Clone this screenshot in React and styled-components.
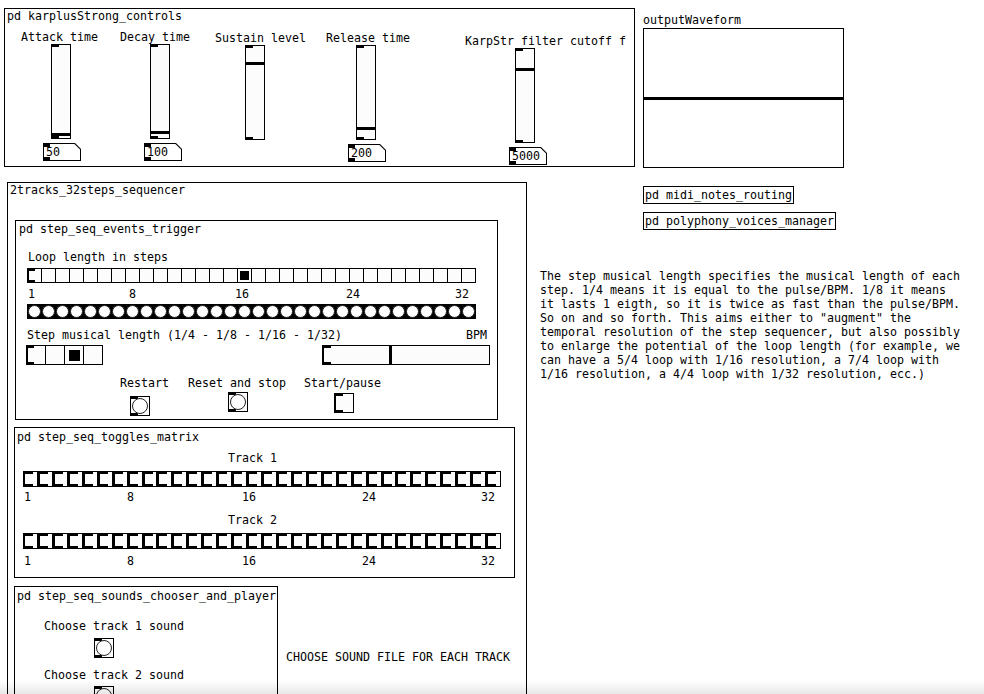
import React from 'react';
import styled, { createGlobalStyle } from 'styled-components';

const GlobalStyle = createGlobalStyle`
  html, body {
    margin: 0;
    padding: 0;
    background: #fff;
    overflow: hidden;
  }
  body {
    font-family: "DejaVu Sans Mono", "Liberation Mono", monospace;
    font-size: 11.63px;
    line-height: 14px;
    color: #000;
  }
`;

const CH = 7;
const FACE = '#fcfcfc';

// small black rectangle drawn as a background layer (pd inlet / outlet marks, knobs)
const ink = (w, h, pos) => `linear-gradient(#000, #000) ${pos} / ${w} ${h} no-repeat`;
const ioMarks = (w = 7, h = 2) => `${ink(`${w}px`, `${h}px`, 'left top')}, ${ink(`${w}px`, `${h}px`, 'left bottom')}`;

const Page = styled.div`
  position: relative;
  width: 984px;
  height: 694px;
  overflow: hidden;
  box-sizing: border-box;
  padding: 8px 0 0 4px;
`;

const Shade = styled.div`
  position: absolute;
  left: 0;
  right: 0;
  bottom: 0;
  height: 14px;
  pointer-events: none;
  background: linear-gradient(to bottom, rgba(0, 0, 0, 0), rgba(0, 0, 0, 0.09));
`;

const TopRow = styled.div`
  display: flex;
  align-items: flex-start;
  height: 160px;
`;

const BottomRow = styled.div`
  display: flex;
  align-items: flex-start;
  margin-top: 14px;
`;

const Gop = styled.div`
  flex: none;
  box-sizing: border-box;
  width: ${p => p.$w}px;
  height: ${p => p.$h}px;
  margin-left: ${p => p.$ml || 0}px;
  margin-top: ${p => p.$mt || 0}px;
  border: 1px solid #000;
  display: flex;
  flex-direction: column;
  align-items: flex-start;
`;

const Caption = styled.div`
  white-space: pre;
  height: 14px;
  margin-left: ${p => p.$ml || 0}px;
  margin-top: ${p => p.$mt || 0}px;
`;

const Label = styled.div`
  white-space: pre;
  height: 14px;
  margin-left: ${p => p.$ml || 0}px;
  margin-top: ${p => p.$mt || 0}px;
`;

/* ---------- karplus strong controls ---------- */

const ControlRow = styled.div`
  display: flex;
  align-items: flex-start;
  margin-top: 7px;
  padding-left: 16px;
`;

const Control = styled.div`
  flex: none;
  width: ${p => p.$w}px;
  margin-top: ${p => p.$dy}px;
  display: flex;
  flex-direction: column;
  align-items: flex-start;
`;

const VSlider = styled.div`
  box-sizing: border-box;
  width: 20px;
  height: 95px;
  margin-left: ${p => p.$ml}px;
  border: 1px solid #000;
  background: ${ioMarks()}, ${p => ink('100%', '3px', `0 ${p.$knob}px`)}, ${FACE};
`;

const NumBox = styled.div`
  box-sizing: border-box;
  width: 38px;
  height: 18px;
  padding: 1px;
  margin-top: 4px;
  margin-left: ${p => p.$ml}px;
  background: #000;
  clip-path: polygon(0 0, calc(100% - 6px) 0, 100% 6px, 100% 100%, 0 100%);
`;

const NumFace = styled.div`
  box-sizing: border-box;
  height: 100%;
  padding-left: 2px;
  line-height: 17px;
  background: ${ioMarks(6, 3)}, #fff;
  clip-path: polygon(0 0, calc(100% - 5.6px) 0, 100% 5.6px, 100% 100%, 0 100%);
`;

const Scope = styled.div`
  flex: none;
  display: flex;
  flex-direction: column;
  margin-left: 8px;
  margin-top: 5px;
`;

const ScopeArea = styled.div`
  box-sizing: border-box;
  width: 201px;
  height: 140px;
  margin-top: 1px;
  border: 1px solid #000;
  background: ${ink('100%', '3px', '0 68px')}, #fff;
`;

/* ---------- pd widgets ---------- */

const RadioRow = styled.div`
  display: flex;
  margin-left: ${p => p.$ml}px;
  margin-top: ${p => p.$mt}px;
`;

const RadioCell = styled.div`
  box-sizing: border-box;
  width: ${p => p.$s}px;
  height: ${p => p.$s}px;
  border: 1px solid #000;
  & + & {
    margin-left: -1px;
  }
  background: ${p => [
    p.$first ? ioMarks(6, 2) : null,
    p.$on ? ink(`${p.$dot}px`, `${p.$dot}px`, 'center') : null,
    FACE,
  ].filter(Boolean).join(', ')};
  ${p => p.$first && 'border-left-width: 2px;'}
`;

const BangRow = styled.div`
  display: flex;
  margin-left: 11px;
  margin-top: 3px;
`;

const BangCell = styled.div`
  box-sizing: border-box;
  width: 15px;
  height: 15px;
  padding: 1px;
  background: #000;
  & + & {
    margin-left: -1px;
  }
`;

const Dot = styled.div`
  box-sizing: border-box;
  width: 100%;
  height: 100%;
  border-radius: 50%;
  border: 1px solid #222;
  background: #fff;
`;

const Bang = styled.div`
  box-sizing: border-box;
  width: 20px;
  height: 20px;
  padding: 1px;
  margin-left: ${p => p.$ml}px;
  margin-top: ${p => p.$mt}px;
  border: 1px solid #000;
  background: ${ioMarks(7, 2)}, ${FACE};
`;

const Toggle = styled.div`
  box-sizing: border-box;
  width: 20px;
  height: 20px;
  margin-left: ${p => p.$ml}px;
  margin-top: ${p => p.$mt}px;
  border: 1px solid #000;
  border-left-width: 2px;
  background: ${ioMarks(7, 2)}, ${FACE};
`;

const ToggleRow = styled.div`
  display: grid;
  grid-template-columns: repeat(32, 1fr);
  width: 478px;
  height: 16px;
  margin-left: 8px;
  margin-top: ${p => p.$mt}px;
`;

const ToggleCell = styled.div`
  box-sizing: border-box;
  border: 1px solid #000;
  border-left-width: 2px;
  background: ${ioMarks(8, 2)}, ${FACE};
`;

const HSlider = styled.div`
  box-sizing: border-box;
  width: 168px;
  height: 20px;
  margin-left: ${p => p.$ml}px;
  border: 1px solid #000;
  border-left-width: 2px;
  background: ${ioMarks(7, 2)}, ${p => ink('3px', '100%', `${p.$knob}px 0`)}, ${FACE};
`;

const WidgetRow = styled.div`
  display: flex;
  align-items: flex-start;
  margin-left: ${p => p.$ml}px;
  margin-top: ${p => p.$mt}px;
`;

const HeaderLine = styled.div`
  display: flex;
  justify-content: space-between;
  width: 460px;
  margin-left: 11px;
  margin-top: 9px;
  white-space: pre;
`;

const Trigger = styled.div`
  flex: none;
  width: ${p => p.$w}px;
  display: flex;
  flex-direction: column;
  align-items: flex-start;
`;

const RulerRow = styled.div`
  display: flex;
  height: 14px;
  margin-top: ${p => p.$mt}px;
`;

const Tick = styled.span`
  flex: none;
  white-space: pre;
  margin-left: ${p => p.$ml}px;
`;

const PdObj = styled.div`
  box-sizing: border-box;
  height: 18px;
  padding: 0 1px;
  line-height: 16px;
  white-space: pre;
  border: 1px solid #000;
  margin-left: 103px;
  margin-top: ${p => p.$mt}px;
`;

const SideCol = styled.div`
  display: flex;
  flex-direction: column;
  align-items: flex-start;
  margin-left: 13px;
`;

const Comment = styled.div`
  white-space: pre;
  line-height: 14px;
  margin-top: ${p => p.$mt}px;
  margin-left: ${p => p.$ml || 0}px;
`;

const SoundsRow = styled.div`
  display: flex;
  align-items: flex-start;
  margin-top: 8px;
`;

/* ---------- data ---------- */

const controls = [
  { label: 'Attack time', w: 99, dy: 0, knob: 88, num: '50', nml: 22 },
  { label: 'Decay time', w: 95, dy: 0, knob: 86, num: '100', nml: 24 },
  { label: 'Sustain level', w: 111, dy: 1, knob: 16 },
  { label: 'Release time', w: 139, dy: 1, knob: 81, num: '200', nml: 22 },
  { label: 'KarpStr filter cutoff f', w: 161, dy: 4, knob: 19, num: '5000', nml: 44, sml: 50 },
];

const stepMarks = [['1', 28], ['8', 129], ['16', 235], ['24', 346], ['32', 455]];
const trackMarks = [['1', 24], ['8', 127], ['16', 242], ['24', 362], ['32', 481]];

const commentText = [
  'The step musical length specifies the musical length of each',
  'step. 1/4 means it is equal to the pulse/BPM. 1/8 it means',
  'it lasts 1 eigth, so it is twice as fast than the pulse/BPM.',
  'So on and so forth. This aims either to "augment" the',
  'temporal resolution of the step sequencer, but also possibly',
  'to enlarge the potential of the loop length (for example, we',
  'can have a 5/4 loop with 1/16 resolution, a 7/4 loop with',
  '1/16 resolution, a 4/4 loop with 1/32 resolution, ecc.)',
].join('\n');

const steps = Array.from({ length: 32 }, (_, i) => i);

const Ruler = ({ base, marks, mt }) => {
  let pos = base;
  return (
    <RulerRow $mt={mt}>
      {marks.map(([t, x]) => {
        const ml = x - pos;
        pos = x + t.length * CH;
        return <Tick key={t} $ml={ml}>{t}</Tick>;
      })}
    </RulerRow>
  );
};

const Radio = ({ count, size, dot, selected, ml, mt }) => (
  <RadioRow $ml={ml} $mt={mt}>
    {Array.from({ length: count }, (_, i) => (
      <RadioCell key={i} $s={size} $dot={dot} $first={i === 0} $on={i === selected} />
    ))}
  </RadioRow>
);

const TrackToggles = ({ mt }) => (
  <ToggleRow $mt={mt}>
    {steps.map(i => <ToggleCell key={i} />)}
  </ToggleRow>
);

export default function App() {
  return (
    <>
      <GlobalStyle />
      <Page>
        <TopRow>
          <Gop $w={631} $h={159}>
            <Caption $ml={2}>pd karplusStrong_controls</Caption>
            <ControlRow>
              {controls.map(c => (
                <Control key={c.label} $w={c.w} $dy={c.dy}>
                  <Label>{c.label}</Label>
                  <VSlider $ml={c.sml || 30} $knob={c.knob} />
                  {c.num && (
                    <NumBox $ml={c.nml}>
                      <NumFace>{c.num}</NumFace>
                    </NumBox>
                  )}
                </Control>
              ))}
            </ControlRow>
          </Gop>
          <Scope>
            <Label>outputWaveform</Label>
            <ScopeArea />
          </Scope>
        </TopRow>

        <BottomRow>
          <Gop $w={520} $h={560} $ml={3}>
            <Caption $ml={2}>2tracks_32steps_sequencer</Caption>

            <Gop $w={483} $h={200} $ml={7} $mt={23}>
              <Caption $ml={3} $mt={1}>pd step_seq_events_trigger</Caption>
              <Label $ml={12} $mt={14}>Loop length in steps</Label>
              <Radio count={32} size={15} dot={9} selected={15} ml={11} mt={4} />
              <Ruler base={16} marks={stepMarks} mt={4} />
              <BangRow>
                {steps.map(i => (
                  <BangCell key={i}><Dot /></BangCell>
                ))}
              </BangRow>
              <HeaderLine>
                <span>Step musical length (1/4 - 1/8 - 1/16 - 1/32)</span>
                <span>BPM</span>
              </HeaderLine>
              <WidgetRow $ml={10} $mt={3}>
                <Radio count={4} size={20} dot={11} selected={2} ml={0} mt={0} />
                <HSlider $ml={219} $knob={65} />
              </WidgetRow>
              <WidgetRow $ml={104} $mt={11}>
                <Trigger $w={68}>
                  <Label>Restart</Label>
                  <Bang $ml={10} $mt={6}><Dot /></Bang>
                </Trigger>
                <Trigger $w={116}>
                  <Label>Reset and stop</Label>
                  <Bang $ml={40} $mt={2}><Dot /></Bang>
                </Trigger>
                <Trigger $w={100}>
                  <Label>Start/pause</Label>
                  <Toggle $ml={30} $mt={3} />
                </Trigger>
              </WidgetRow>
            </Gop>

            <Gop $w={501} $h={151} $ml={6} $mt={7}>
              <Caption $ml={2} $mt={2}>pd step_seq_toggles_matrix</Caption>
              <Label $ml={213} $mt={7}>Track 1</Label>
              <TrackToggles mt={6} />
              <Ruler base={15} marks={trackMarks} mt={3} />
              <Label $ml={213} $mt={9}>Track 2</Label>
              <TrackToggles mt={6} />
              <Ruler base={15} marks={trackMarks} mt={5} />
            </Gop>

            <SoundsRow>
              <Gop $w={264} $h={150} $ml={6}>
                <Caption $ml={2} $mt={2}>pd step_seq_sounds_chooser_and_player</Caption>
                <Label $ml={29} $mt={16}>Choose track 1 sound</Label>
                <Bang $ml={79} $mt={5}><Dot /></Bang>
                <Label $ml={29} $mt={10}>Choose track 2 sound</Label>
                <Bang $ml={79} $mt={4}><Dot /></Bang>
              </Gop>
              <Comment $ml={8} $mt={64}>CHOOSE SOUND FILE FOR EACH TRACK</Comment>
            </SoundsRow>
          </Gop>

          <SideCol>
            <PdObj $mt={4}>pd midi_notes_routing</PdObj>
            <PdObj $mt={8}>pd polyphony_voices_manager</PdObj>
            <Comment $mt={39}>{commentText}</Comment>
          </SideCol>
        </BottomRow>
        <Shade />
      </Page>
    </>
  );
}
